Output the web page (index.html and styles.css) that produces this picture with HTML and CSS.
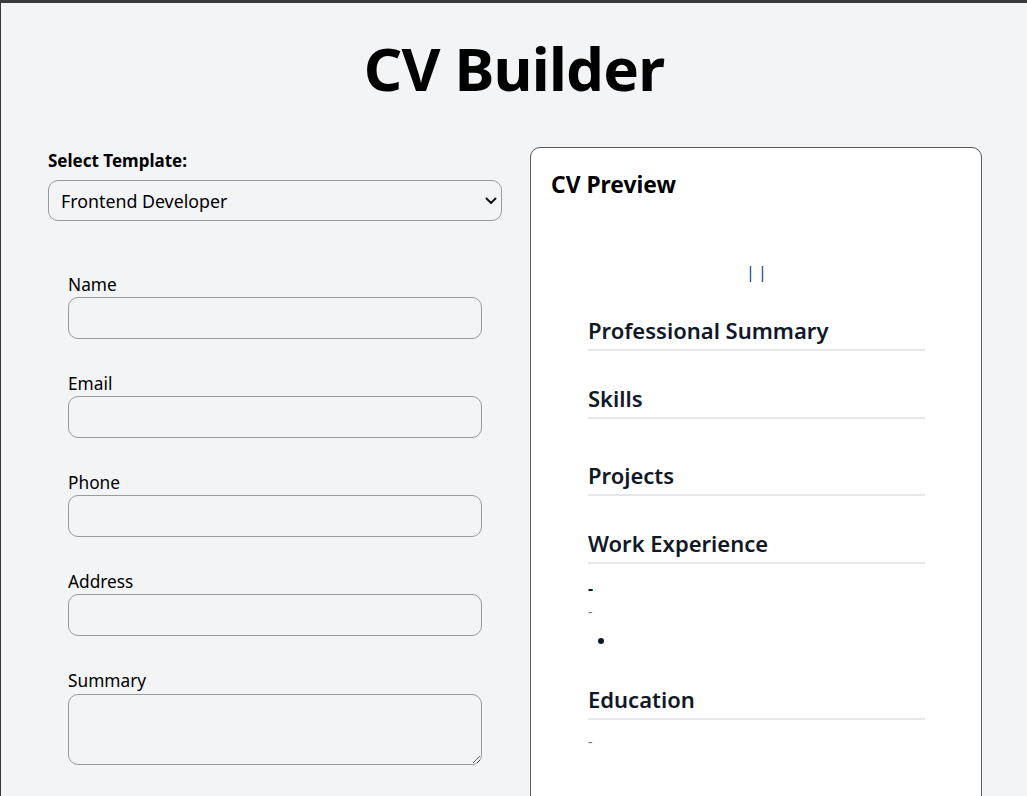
FILE: index.html
```html
<!DOCTYPE html>
<html lang="en">
<head>
<meta charset="utf-8">
<title>CV Builder</title>
<link rel="stylesheet" href="styles.css">
</head>
<body>
<div class="window">
  <h1 class="title">CV Builder</h1>
  <div class="layout">
    <div class="editor">
      <div class="picker">
        <label class="picker-label" for="tpl">Select Template:</label>
        <div class="select-wrap">
          <select id="tpl" class="select">
            <option>Frontend Developer</option>
            <option>Backend Developer</option>
          </select>
          <svg class="chevron" width="12" height="8" viewBox="0 0 12 8" aria-hidden="true"><path d="M1.5 1.5 L6 6 L10.5 1.5" fill="none" stroke="#111" stroke-width="2" stroke-linecap="round" stroke-linejoin="round"/></svg>
        </div>
      </div>
      <form class="fields">
        <div class="field"><label class="field-label">Name</label><input class="input" type="text"></div>
        <div class="field"><label class="field-label">Email</label><input class="input" type="email"></div>
        <div class="field"><label class="field-label">Phone</label><input class="input" type="text"></div>
        <div class="field"><label class="field-label">Address</label><input class="input" type="text"></div>
        <div class="field"><label class="field-label">Summary</label><textarea class="textarea"></textarea></div>
      </form>
    </div>
    <section class="preview">
      <h2 class="preview-title">CV Preview</h2>
      <div class="cv">
        <h1 class="cv-name"></h1>
        <p class="cv-contact">| |</p>
        <section class="cv-section cv-first">
          <h3 class="cv-heading">Professional Summary</h3>
        </section>
        <section class="cv-section">
          <h3 class="cv-heading">Skills</h3>
          <div class="skills"></div>
        </section>
        <section class="cv-section">
          <h3 class="cv-heading">Projects</h3>
        </section>
        <section class="cv-section">
          <h3 class="cv-heading">Work Experience</h3>
          <div class="job">
            <p class="job-title">-</p>
            <p class="muted">-</p>
            <ul class="job-points"><li></li></ul>
          </div>
        </section>
        <section class="cv-section">
          <h3 class="cv-heading">Education</h3>
          <p class="muted edu">-</p>
        </section>
      </div>
    </section>
  </div>
</div>
</body>
</html>
```
FILE: styles.css
```css
html, body {
  margin: 0;
  padding: 0;
}
body {
  background: #f3f4f6;
  font-family: "Noto Sans", "Open Sans", sans-serif;
  color: #000;
  overflow: hidden;
}
.window {
  border-top: 3px solid #3a3a3a;
  border-left: 1px solid #3a3a3a;
  min-height: 793px;
  box-sizing: border-box;
}
.title {
  margin: 0;
  padding-top: 27px;
  text-align: center;
  font-size: 60px;
  line-height: 76px;
  font-weight: 700;
  letter-spacing: -0.8px;
}
.layout {
  display: grid;
  grid-template-columns: 454px 452px;
  column-gap: 28px;
  padding: 0 44px 0 47px;
  margin-top: 41px;
  align-items: start;
}
.picker-label {
  display: block;
  margin-top: 2px;
  font-size: 17px;
  line-height: 24px;
  font-weight: 700;
}
.select-wrap {
  position: relative;
  margin-top: 7px;
}
.select {
  display: block;
  width: 100%;
  height: 41px;
  box-sizing: border-box;
  appearance: none;
  -webkit-appearance: none;
  background: #f3f4f6;
  border: 1px solid #9a9a9a;
  border-radius: 10px;
  padding: 0 12px;
  font-family: inherit;
  font-size: 17.8px;
  color: #000;
}
.chevron {
  position: absolute;
  right: 5px;
  top: 17px;
  pointer-events: none;
}
.fields {
  display: flex;
  flex-direction: column;
  gap: 32px;
  padding: 20px;
  margin: 31px 0 0;
}
.field-label {
  display: block;
  font-size: 17.3px;
  line-height: 24px;
  padding-top: 1px;
  margin-bottom: -1px;
}
.input, .textarea {
  display: block;
  width: 100%;
  box-sizing: border-box;
  margin-top: 1px;
  border: 1px solid #9a9a9a;
  border-radius: 10px;
  background: #f3f4f6;
  font-family: inherit;
  font-size: 16px;
}
.input {
  height: 42px;
}
.textarea {
  height: 71px;
  margin-top: 2px;
}
.preview {
  background: #fff;
  border: 1px solid #5a5a5a;
  border-radius: 10px;
  padding: 24px 20px;
  min-height: 700px;
}
.preview-title {
  margin: 0;
  font-size: 22.8px;
  line-height: 26px;
  font-weight: 700;
}
.cv {
  padding: 62px 36px 0 37px;
  color: #111827;
}
.cv-name {
  margin: 0;
  height: 0;
}
.cv-contact {
  margin: 0;
  text-align: center;
  font-size: 16px;
  line-height: 24px;
  color: #1e3a8a;
  word-spacing: -1px;
}
.cv-heading {
  margin: 34px 0 0;
  padding-bottom: 6px;
  border-bottom: 2px solid #e5e7eb;
  font-size: 22px;
  line-height: 26px;
  font-weight: 600;
}
.cv-first .cv-heading {
  margin-top: 33px;
}
.skills {
  height: 9px;
}
.job-title {
  margin: 12px 0 0;
  font-size: 16px;
  line-height: 24px;
  font-weight: 700;
}
.muted {
  margin: 2px 0 0;
  font-size: 14px;
  line-height: 20px;
  color: #6b7280;
}
.job-points {
  margin: 6px 0 0;
  padding-left: 28px;
  font-size: 16px;
  line-height: 24px;
}
.job-points li {
  height: 24px;
}
.edu {
  margin-top: 12px;
}
```
